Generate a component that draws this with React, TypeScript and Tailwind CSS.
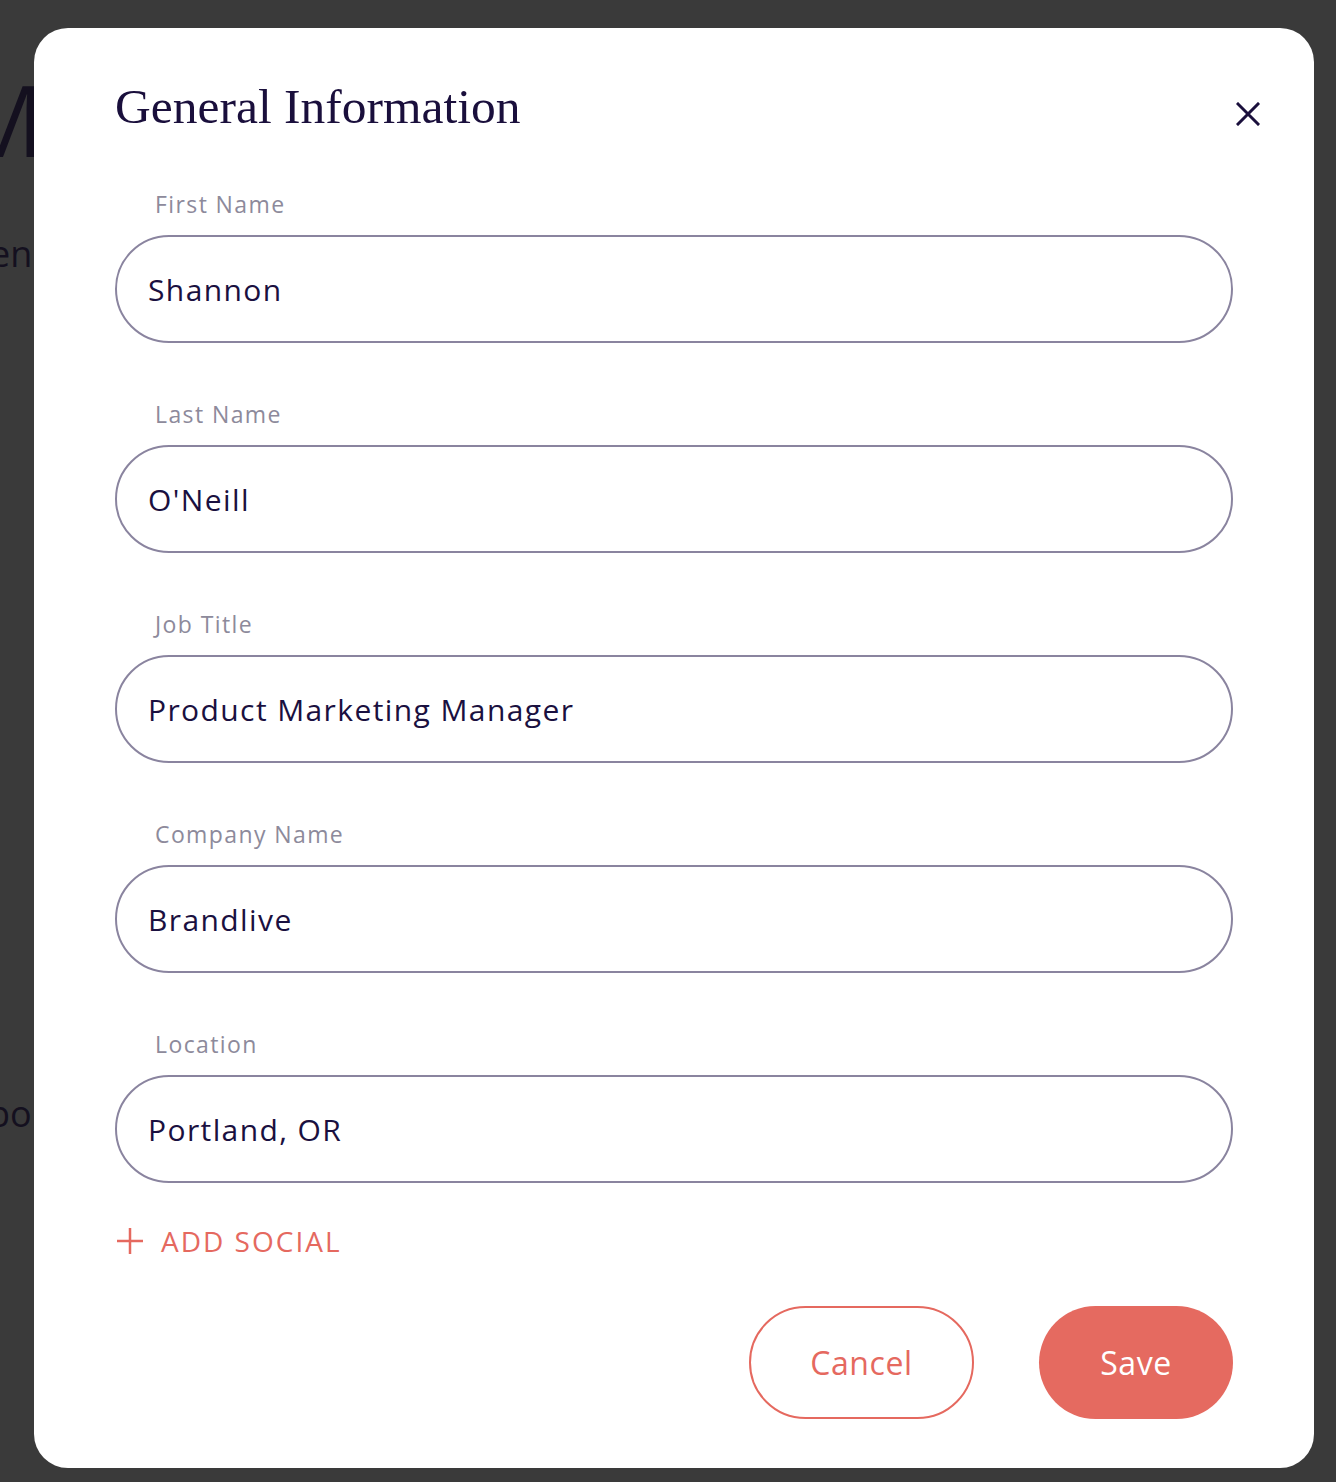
import React from "react";

const sans = { fontFamily: '"Open Sans", "DejaVu Sans", sans-serif' };

function Field({ label, value }: { label: string; value: string }) {
  return (
    <div className="flex flex-col">
      <div className="pl-[40px] h-[30px] leading-[30px] text-[23px] tracking-[1.4px] text-[#8d8a9b]" style={sans}>
        {label}
      </div>
      <div className="mt-[16px] h-[108px] rounded-full border-2 border-[#8a849f] flex items-center pl-[31px]">
        <span className="text-[30px] tracking-[1.4px] text-[#1a1040]" style={sans}>{value}</span>
      </div>
    </div>
  );
}

export default function App() {
  return (
    <div className="relative w-[1336px] h-[1482px] overflow-hidden bg-[#3a3a3a]">
      {/* background page (dimmed) */}
      <div className="absolute left-[-44px] top-[70px] text-[98px] leading-none font-normal text-[#14101f]" style={sans}>M</div>
      <div className="absolute left-[-10px] top-[236px] text-[36px] leading-none text-[#14101f]" style={sans}>en</div>
      <div className="absolute left-[-12px] top-[1096px] text-[36px] leading-none text-[#14101f]" style={sans}>po</div>

      {/* modal */}
      <div className="absolute left-[34px] top-[28px] w-[1280px] h-[1440px] rounded-[34px] bg-white px-[81px] pt-[49px]">
        <div className="flex items-center justify-between h-[60px]">
          <h1
            className="text-[49.5px] leading-[60px] text-[#1a0f3c]"
            style={{ fontFamily: '"Liberation Serif", "DejaVu Serif", serif' }}
          >
            General Information
          </h1>
          <button className="-mr-[29px] mt-[14px] w-[28px] h-[28px] flex items-center justify-center">
            <svg width="24" height="24" viewBox="0 0 24 24" fill="none" stroke="#1a0f3c" strokeWidth="3" strokeLinecap="square">
              <path d="M2 2 L22 22 M22 2 L2 22" />
            </svg>
          </button>
        </div>

        <div className="mt-[52px] flex flex-col gap-[56px]">
          <Field label="First Name" value="Shannon" />
          <Field label="Last Name" value="O'Neill" />
          <Field label="Job Title" value="Product Marketing Manager" />
          <Field label="Company Name" value="Brandlive" />
          <Field label="Location" value="Portland, OR" />
        </div>

        <div className="mt-[43px] h-[30px] flex items-center gap-[18px] pl-[2px]">
          <svg width="26" height="26" viewBox="0 0 26 26" fill="none" stroke="#e5695f" strokeWidth="2.5">
            <path d="M13 0 V26 M0 13 H26" />
          </svg>
          <span className="text-[28px] leading-[30px] text-[#e5695f] tracking-[2px]" style={sans}>ADD SOCIAL</span>
        </div>

        <div className="mt-[50px] flex justify-end gap-[65px]">
          <button
            className="w-[225px] h-[113px] rounded-full border-2 border-[#e5695f] text-[32px] tracking-[0.6px] text-[#e5695f]"
            style={sans}
          >
            Cancel
          </button>
          <button
            className="w-[194px] h-[113px] rounded-full bg-[#e56a60] text-[32px] tracking-[0.6px] text-white"
            style={sans}
          >
            Save
          </button>
        </div>
      </div>
    </div>
  );
}
